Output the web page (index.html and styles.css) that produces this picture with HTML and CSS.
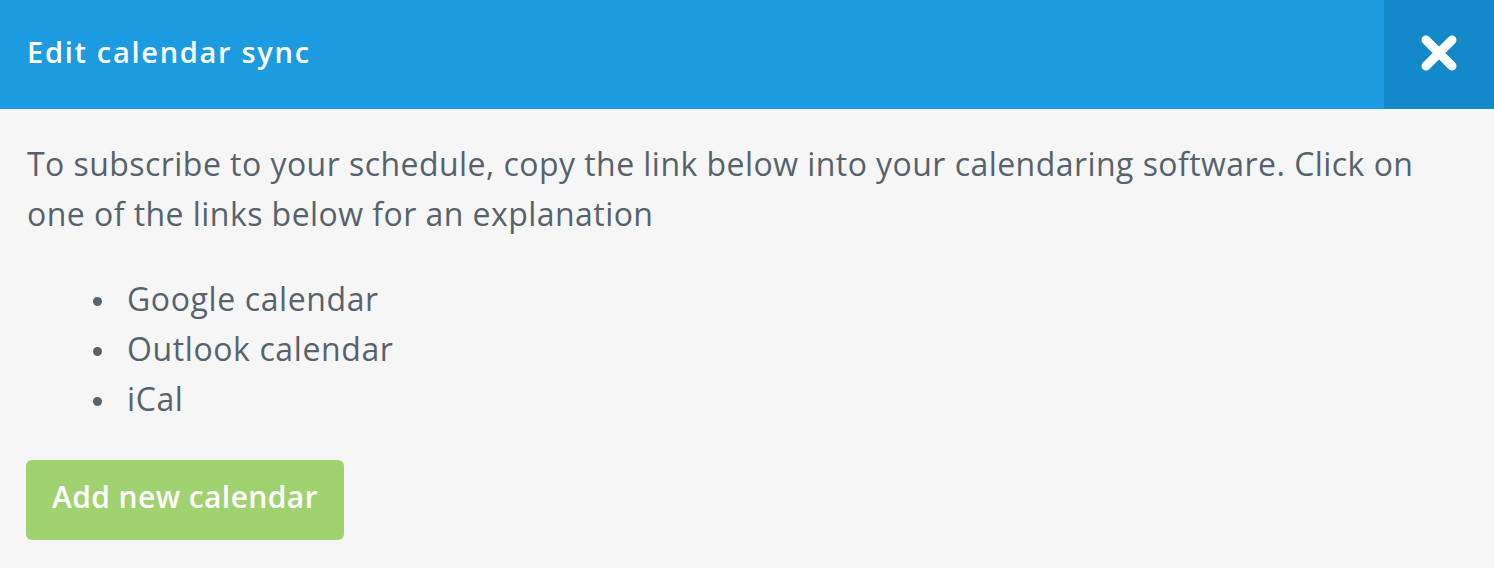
FILE: index.html
```html
<!DOCTYPE html>
<html lang="en">
  <head>
    <meta charset="UTF-8" />
    <meta name="viewport" content="width=device-width, initial-scale=1.0" />
    <title>Edit calendar sync</title>
    <link rel="stylesheet" href="styles.css">
  </head>
  <body>
    <div class="sync-modal">
      <div class="sync-header">
        <h2>Edit calendar sync</h2>
        <button class="sync-close" type="button" aria-label="Close">
          <svg width="36" height="36" viewBox="0 0 36 36">
            <path d="M5 5 L31 31 M31 5 L5 31" stroke="#fff" stroke-width="9" stroke-linecap="round" />
          </svg>
        </button>
      </div>

      <div class="sync-body">
        <p>
          To subscribe to your schedule, copy the link below into your calendaring software. Click on
          one of the links below for an explanation
        </p>
        <ul class="sync-links">
          <li>Google calendar</li>
          <li>Outlook calendar</li>
          <li>iCal</li>
        </ul>
        <button class="sync-add" type="button">Add new calendar</button>
      </div>
    </div>
  </body>
</html>
```

FILE: styles.css
```css
* {
  padding: 0;
  margin: 0;
  box-sizing: border-box;
}

body {
  font-family: "Open Sans", sans-serif;
  background: #f6f6f6;
  color: #56636d;
}

.sync-header {
  display: flex;
  align-items: stretch;
  height: 109px;
  background-color: #1c9be1;
}

.sync-header h2 {
  flex: 1;
  display: flex;
  align-items: center;
  padding-left: 27px;
  padding-bottom: 7px;
  color: #fff;
  font-size: 29px;
  font-weight: 600;
  letter-spacing: 1.7px;
}

.sync-close {
  width: 110px;
  padding-bottom: 4px;
  border: none;
  background-color: #1389c9;
  display: flex;
  justify-content: center;
  align-items: center;
  cursor: pointer;
}

.sync-body {
  padding: 30px 27px 0;
}

.sync-body p {
  max-width: 1410px;
  font-size: 32px;
  line-height: 50px;
  letter-spacing: 0.45px;
}

.sync-links {
  margin-top: 35px;
  list-style: none;
  font-size: 32px;
  line-height: 50px;
  letter-spacing: 0.6px;
}

.sync-links li {
  position: relative;
  padding-left: 100px;
}

.sync-links li::before {
  content: "";
  position: absolute;
  left: 66px;
  top: 23px;
  width: 9px;
  height: 9px;
  border-radius: 50%;
  background-color: #56636d;
}

.sync-add {
  margin: 36px 0 0 -1px;
  width: 318px;
  height: 80px;
  padding-bottom: 7px;
  border: none;
  border-radius: 6px;
  background-color: #a1d270;
  color: #fff;
  font-family: inherit;
  font-size: 30px;
  font-weight: 600;
  letter-spacing: 0.4px;
  cursor: pointer;
}
```
